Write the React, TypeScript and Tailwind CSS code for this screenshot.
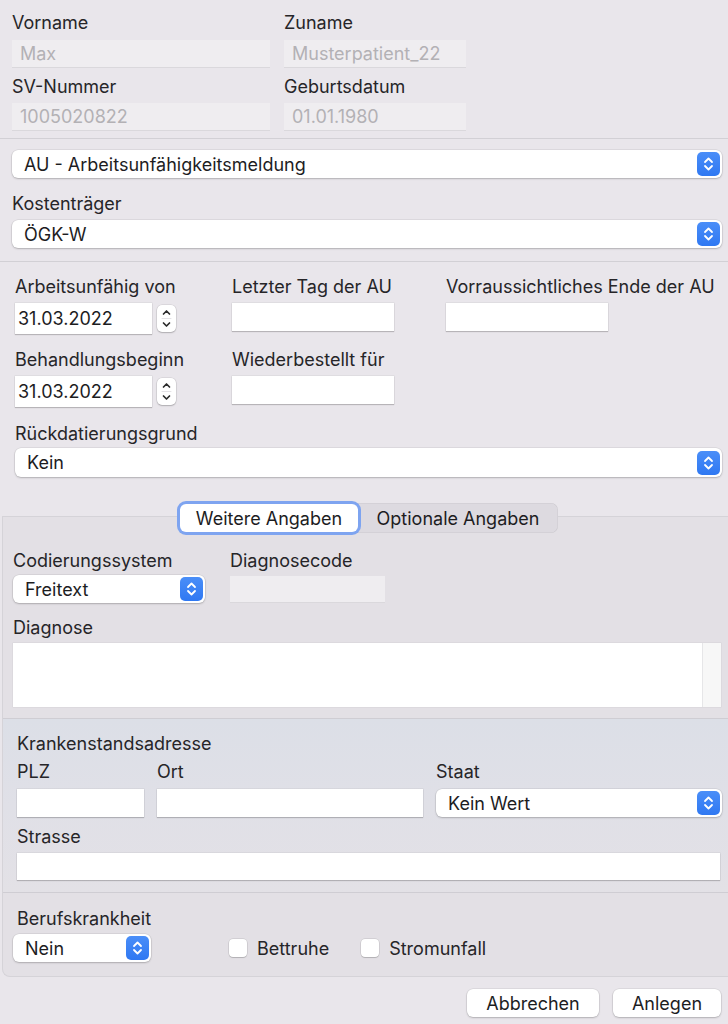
import type { ReactNode } from 'react'

const font = "font-['Inter','Liberation_Sans',sans-serif]"

function Label({ children, className = '' }: { children: ReactNode; className?: string }) {
  return <div className={`h-5 leading-5 whitespace-nowrap ${className}`}>{children}</div>
}

function Field({ className = '', value }: { className?: string; value?: string }) {
  return (
    <div
      className={`bg-white shadow-[0_0_0_0.5px_rgba(0,0,0,0.08),0_1px_1px_rgba(0,0,0,0.18)] flex items-center px-[3px] text-[#1d1d1f] ${className}`}
    >
      {value}
    </div>
  )
}

function DisabledField({ className = '', value }: { className?: string; value?: string }) {
  return (
    <div
      className={`bg-[#efedf0] border-b border-[#dad8dc] flex items-center px-[8px] text-[#b3b1b5] ${className}`}
    >
      {value}
    </div>
  )
}

function BlueStepper() {
  return (
    <div className="w-[23px] h-[24px] rounded-[5px] bg-gradient-to-b from-[#4a8ef8] to-[#2f78f2] grid place-items-center shrink-0">
      <svg width="11" height="16" viewBox="0 0 11 16" fill="none" stroke="white" strokeWidth="1.8" strokeLinecap="round" strokeLinejoin="round">
        <path d="M2 6 L5.5 2.5 L9 6" />
        <path d="M2 10 L5.5 13.5 L9 10" />
      </svg>
    </div>
  )
}

function Select({ value, className = '' }: { value: string; className?: string }) {
  return (
    <div
      className={`bg-white rounded-[6px] shadow-[0_0_0_0.5px_rgba(0,0,0,0.1),0_1px_2px_rgba(0,0,0,0.2)] flex items-center justify-between pl-[12px] pr-[2px] text-[#1d1d1f] ${className}`}
    >
      <span>{value}</span>
      <BlueStepper />
    </div>
  )
}

function DateStepper() {
  return (
    <div className="w-[19px] h-[27px] rounded-[5px] bg-white shadow-[0_0_0_0.5px_rgba(0,0,0,0.12),0_1px_1.5px_rgba(0,0,0,0.2)] flex flex-col items-center justify-center ml-[5px] shrink-0">
      <svg width="11" height="23" viewBox="0 0 11 23" fill="none" stroke="#2b2b2b" strokeWidth="1.7" strokeLinecap="round" strokeLinejoin="round">
        <path d="M2.5 7 L5.5 4 L8.5 7" />
        <path d="M1 11.5 L10 11.5" stroke="#e4e2e6" strokeWidth="1" />
        <path d="M2.5 16 L5.5 19 L8.5 16" />
      </svg>
    </div>
  )
}

function Checkbox({ label }: { label: string }) {
  return (
    <div className="flex items-center">
      <div className="w-[18px] h-[18px] rounded-[4px] bg-white shadow-[0_0_0_0.5px_rgba(0,0,0,0.15),0_1px_1px_rgba(0,0,0,0.15)]" />
      <span className="ml-[10px]">{label}</span>
    </div>
  )
}

function Button({ children, className = '' }: { children: ReactNode; className?: string }) {
  return (
    <div
      className={`h-[28px] bg-white rounded-[6px] shadow-[0_0_0_0.5px_rgba(0,0,0,0.1),0_1px_2px_rgba(0,0,0,0.2)] grid place-items-center text-[#1d1d1f] ${className}`}
    >
      {children}
    </div>
  )
}

export default function App() {
  return (
    <div className={`w-[728px] h-[1024px] overflow-hidden bg-[#e9e6eb] text-[18px] text-[#262528] ${font}`}>
      {/* Patient */}
      <div className="pl-3 pt-[13px]">
        <div className="grid grid-cols-[258px_182px] gap-x-[14px]">
          <div>
            <Label>Vorname</Label>
            <DisabledField className="mt-[7px] h-[28px]" value="Max" />
            <Label className="mt-[9px]">SV-Nummer</Label>
            <DisabledField className="mt-[6px] h-[28px]" value="1005020822" />
          </div>
          <div>
            <Label>Zuname</Label>
            <DisabledField className="mt-[7px] h-[28px]" value="Musterpatient_22" />
            <Label className="mt-[9px]">Geburtsdatum</Label>
            <DisabledField className="mt-[6px] h-[28px]" value="01.01.1980" />
          </div>
        </div>
      </div>
      <div className="mt-[7px] h-px bg-[#d2d0d5]" />

      {/* Art + Kostenträger */}
      <div className="pl-3 pr-[6px]">
        <Select className="mt-[11px] h-[28px]" value="AU - Arbeitsunfähigkeitsmeldung" />
        <Label className="mt-4">Kostenträger</Label>
        <Select className="mt-[6px] h-[28px]" value="ÖGK-W" />
      </div>
      <div className="mt-[13px] h-px bg-[#d2d0d5]" />

      {/* Zeitraum */}
      <div className="pl-[15px] pr-[6px] pt-[15px]">
        <div className="grid grid-cols-[217px_214px_1fr]">
          <div>
            <Label>Arbeitsunfähig von</Label>
            <div className="mt-[6px] flex items-center">
              <Field className="w-[137px] h-[31px]" value="31.03.2022" />
              <DateStepper />
            </div>
            <Label className="mt-4">Behandlungsbeginn</Label>
            <div className="mt-[6px] flex items-center">
              <Field className="w-[137px] h-[31px]" value="31.03.2022" />
              <DateStepper />
            </div>
          </div>
          <div>
            <Label>Letzter Tag der AU</Label>
            <Field className="mt-[6px] w-[162px] h-[28px]" />
            <Label className="mt-[19px]">Wiederbestellt für</Label>
            <Field className="mt-[6px] w-[162px] h-[28px]" />
          </div>
          <div>
            <Label>Vorraussichtliches Ende der AU</Label>
            <Field className="mt-[6px] w-[162px] h-[28px]" />
          </div>
        </div>
        <Label className="mt-[17px]">Rückdatierungsgrund</Label>
        <Select className="mt-1 h-[29px]" value="Kein" />
      </div>

      {/* Tabs */}
      <div className="mt-[26px] relative z-10 flex">
        <div className="ml-[180px] w-[378px] h-[30px] rounded-[7px] bg-[#dddae0] shadow-[inset_0_0_0_0.5px_rgba(0,0,0,0.08)] flex items-center">
          <div className="w-[178px] h-[28px] rounded-[6px] bg-white ring-[3px] ring-[#7ea4f0] shadow-[0_1px_2px_rgba(0,0,0,0.2)] grid place-items-center text-[#1d1d1f]">
            Weitere Angaben
          </div>
          <div className="flex-1 grid place-items-center text-[#1d1d1f]">Optionale Angaben</div>
        </div>
      </div>

      <div className="-mt-[17px] ml-[2px] rounded-bl-[8px] border-t border-l border-b border-[#d5d3d8] bg-[#e3e0e5] pt-[34px] pb-[14px]">
        <div className="pl-[10px] pr-[7px]">
          <div className="grid grid-cols-[217px_1fr]">
            <div>
              <Label>Codierungssystem</Label>
              <Select className="mt-1 w-[192px] h-[28px]" value="Freitext" />
            </div>
            <div>
              <Label>Diagnosecode</Label>
              <DisabledField className="mt-[5px] w-[155px] h-[27px]" />
            </div>
          </div>
          <Label className="mt-[15px]">Diagnose</Label>
          <div className="mt-[5px] h-[64px] flex bg-white shadow-[0_0_0_0.5px_rgba(0,0,0,0.06)]">
            <div className="flex-1" />
            <div className="w-[19px] bg-[#f7f7f7] border-l border-[#e6e6e8]" />
          </div>
        </div>
        <div className="mt-[11px] h-px bg-[#cfcdd3]" />

        <div className="pl-[14px] pr-[7px] pt-[15px] pb-[12px] bg-gradient-to-b from-[#dcdfe7] via-[#e0e0e7] to-[#e3e1e6]">
          <Label>Krankenstandsadresse</Label>
          <div className="mt-2 grid grid-cols-[127px_266px_286px] gap-x-[13px]">
            <div>
              <Label>PLZ</Label>
              <Field className="mt-[7px] h-[28px]" />
            </div>
            <div>
              <Label>Ort</Label>
              <Field className="mt-[7px] h-[28px]" />
            </div>
            <div>
              <Label>Staat</Label>
              <Select className="mt-[7px] h-[28px]" value="Kein Wert" />
            </div>
          </div>
          <Label className="mt-[10px]">Strasse</Label>
          <Field className="mt-[6px] h-[27px] mr-[1px]" />
        </div>
        <div className="h-px bg-[#cfcdd3]" />

        <div className="pl-[10px] pt-4">
          <Label className="pl-1">Berufskrankheit</Label>
          <div className="mt-[5px] flex items-center">
            <Select className="w-[138px] h-[28px]" value="Nein" />
            <div className="ml-[78px]">
              <Checkbox label="Bettruhe" />
            </div>
            <div className="ml-[32px]">
              <Checkbox label="Stromunfall" />
            </div>
          </div>
        </div>
      </div>

      {/* Actions */}
      <div className="mt-[12px] pr-[7px] flex justify-end gap-[14px]">
        <Button className="w-[132px]">Abbrechen</Button>
        <Button className="w-[108px]">Anlegen</Button>
      </div>
    </div>
  )
}
